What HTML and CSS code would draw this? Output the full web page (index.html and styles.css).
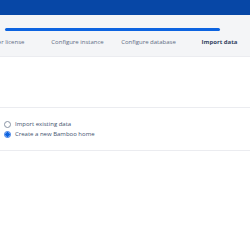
FILE: index.html
```html
<!DOCTYPE html>
<html>
<head>
<meta charset="utf-8">
<link rel="stylesheet" href="styles.css">
</head>
<body>
<header class="topbar"></header>
<section class="wizard">
  <div class="track"><div class="fill"></div></div>
  <ol class="steps">
    <li class="step">Enter license</li>
    <li class="step">Configure instance</li>
    <li class="step">Configure database</li>
    <li class="step current">Import data</li>
  </ol>
</section>
<main class="content">
  <div class="intro"></div>
  <form class="options">
    <label class="option"><span class="radio"></span>Import existing data</label>
    <label class="option"><span class="radio checked"></span>Create a new Bamboo home</label>
  </form>
</main>
</body>
</html>
```
FILE: styles.css
```css
html, body {
  margin: 0;
  padding: 0;
  background: #ffffff;
  overflow: hidden;
  font-family: "Open Sans", "Noto Sans", sans-serif;
}
.topbar {
  height: 15px;
  background: #0747a6;
}
.wizard {
  height: 28px;
  background: #f4f5f7;
  border-bottom: 1px solid #ebecf0;
  padding-top: 13px;
  box-sizing: content-box;
}
.track {
  margin-left: 5px;
  width: 215px;
  height: 3px;
}
.fill {
  height: 3px;
  border-radius: 2px;
  background: #0c63e0;
}
.steps {
  list-style: none;
  margin: 7px 0 0 -29px;
  padding: 0;
  display: grid;
  grid-template-columns: repeat(4, 71px);
}
.step {
  text-align: center;
  font-size: 6px;
  color: #5e6c84;
  line-height: 8px;
  white-space: nowrap;
}
.step.current {
  font-weight: 700;
  color: #344563;
}
.content {
  padding-top: 50px;
}
.intro {
  border-bottom: 1px solid #ebecf0;
}
.options {
  display: flex;
  flex-direction: column;
  gap: 2px;
  padding: 12px 0 12px 4px;
  border-bottom: 1px solid #ebecf0;
}
.option {
  display: flex;
  align-items: center;
  gap: 4px;
  font-size: 6px;
  line-height: 8px;
  color: #42526e;
}
.radio {
  width: 5px;
  height: 5px;
  border: 1px solid #8993a4;
  border-radius: 50%;
  background: #fff;
  box-sizing: content-box;
}
.radio.checked {
  border-color: #2f74e6;
  background: radial-gradient(circle, #0c63e0 0 2px, #ffffff 2.5px);
}
```
